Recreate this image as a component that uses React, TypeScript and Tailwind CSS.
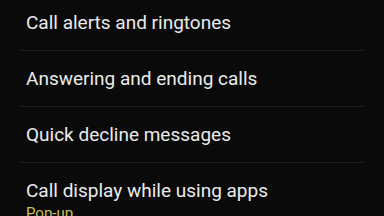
import React from "react";

const items = [
  { title: "Call alerts and ringtones" },
  { title: "Answering and ending calls" },
  { title: "Quick decline messages" },
  { title: "Call display while using apps", sub: "Pop-up" },
];

export default function App() {
  return (
    <div className="w-[384px] h-[216px] overflow-hidden bg-[#0a0a0a]" style={{ fontFamily: "Roboto, 'Noto Sans', sans-serif" }}>
      <div className="-mt-[5px] flex flex-col">
        {items.map((it, i) => (
          <div key={i}>
            {i > 0 && <div className="mx-[20px] h-px bg-[#1f1f1f]" />}
            <div className={`h-[55px] flex flex-col ${it.sub ? "justify-start pt-[16px]" : "justify-center"} px-[26px]`}>
              <div className="text-[19px] leading-[24px] text-[#ebebeb]">{it.title}</div>
              {it.sub && <div className="mt-[2px] text-[15px] leading-[16px] text-[#c8c05a]">{it.sub}</div>}
            </div>
          </div>
        ))}
      </div>
    </div>
  );
}
